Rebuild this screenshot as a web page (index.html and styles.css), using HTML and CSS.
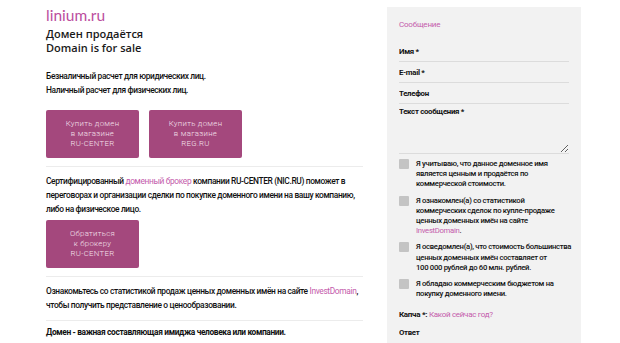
FILE: index.html
```html
<!DOCTYPE html>
<html lang="ru">
<head>
  <meta charset="UTF-8">
  <meta name="viewport" content="width=device-width, initial-scale=1.0">
  <title>linium.ru — Домен продаётся</title>
  <link rel="stylesheet" href="styles.css">
</head>
<body>
  <div class="page">
    <main class="main">
      <div class="logo">linium.ru</div>
      <div class="tagline">Домен продаётся<br>Domain is for sale</div>

      <p class="payment">Безналичный расчет для юридических лиц.<br>Наличный расчет для физических лиц.</p>

      <div class="buttons">
        <a class="btn" href="#">Купить домен<br>в магазине<br>RU-CENTER</a>
        <a class="btn" href="#">Купить домен<br>в магазине<br>REG.RU</a>
      </div>

      <hr class="sep">

      <p class="text">Сертифицированный <a href="#">доменный брокер</a> компании RU-CENTER (NIC.RU) поможет в<br>переговорах и организации сделки по покупке доменного имени на вашу компанию,<br>либо на физическое лицо.</p>

      <div class="buttons">
        <a class="btn" href="#">Обратиться<br>к брокеру<br>RU-CENTER</a>
      </div>

      <hr class="sep">

      <p class="text">Ознакомьтесь со статистикой продаж ценных доменных имён на сайте <a href="#">InvestDomain</a>,<br>чтобы получить представление о ценообразовании.</p>

      <hr class="sep">

      <p class="text text-strong">Домен - важная составляющая имиджа человека или компании.</p>
    </main>

    <aside class="form">
      <div class="form-title">Сообщение</div>

      <input class="field" type="text" placeholder="Имя *">
      <input class="field" type="email" placeholder="E-mail *">
      <input class="field" type="tel" placeholder="Телефон">
      <textarea class="field field-area" placeholder="Текст сообщения *"></textarea>

      <label class="check"><span class="box"></span><span>Я учитываю, что данное доменное имя<br>является ценным и продаётся по<br>коммерческой стоимости.</span></label>
      <label class="check"><span class="box"></span><span>Я ознакомлен(а) со статистикой<br>коммерческих сделок по купле-продаже<br>ценных доменных имён на сайте<br><a href="#">InvestDomain</a>.</span></label>
      <label class="check"><span class="box"></span><span>Я осведомлен(а), что стоимость большинства<br>ценных доменных имён составляет от<br>100 000 рублей до 60 млн. рублей.</span></label>
      <label class="check"><span class="box"></span><span>Я обладаю коммерческим бюджетом на<br>покупку доменного имени.</span></label>

      <div class="captcha"><b>Капча *:</b> <a href="#">Какой сейчас год?</a></div>
      <input class="field field-answer" type="text" placeholder="Ответ">
    </aside>
  </div>
</body>
</html>
```

FILE: styles.css
```css
body {
  margin: 0;
  font-family: Roboto, 'Liberation Sans', Arial, sans-serif;
  font-size: 8.4px;
  font-weight: 500;
  letter-spacing: -0.36px;
  color: #111;
  background: #fff;
}

a {
  color: #c45bab;
  font-weight: 400;
  text-decoration: none;
}

.page {
  display: flex;
  gap: 24px;
  padding: 7px 0 0 46px;
}

.main {
  width: 317px;
  white-space: nowrap;
}

.logo {
  font-family: Lato, 'Open Sans', sans-serif;
  font-size: 15.5px;
  line-height: 16px;
  font-weight: 400;
  letter-spacing: 0;
  color: #bb4d9e;
}

.tagline {
  margin-top: 4px;
  font-family: 'Open Sans', sans-serif;
  font-size: 11px;
  line-height: 14px;
  font-weight: 600;
  letter-spacing: 0;
  color: #1a1a1a;
}

.payment {
  margin: 14px 0 13px;
  line-height: 14px;
}

.buttons {
  display: flex;
  gap: 10px;
}

.btn {
  display: flex;
  align-items: center;
  justify-content: center;
  width: 93px;
  height: 48px;
  background: #a4487d;
  border-radius: 2px;
  color: #f4e0ec;
  font-size: 7.8px;
  font-weight: 300;
  line-height: 10px;
  text-align: center;
  letter-spacing: 0.3px;
}

.sep {
  margin: 8px 0 0;
  border: none;
  border-top: 1px solid #ececec;
}

.text {
  margin: 7px 0 4px;
  line-height: 14px;
}

.text-strong {
  margin-top: 4px;
  font-weight: 700;
}

.form {
  width: 170px;
  padding: 12px 12px 0;
  background: #f2f2f2;
  font-size: 7.7px;
  letter-spacing: -0.3px;
  white-space: nowrap;
}

.form-title {
  color: #c45bab;
  font-size: 8px;
  font-weight: 400;
  letter-spacing: -0.2px;
  line-height: 12px;
  margin-bottom: 10px;
}

.field {
  display: block;
  box-sizing: border-box;
  width: 100%;
  height: 21px;
  margin: 0;
  padding: 0;
  border: none;
  border-bottom: 1px solid #dcdcdc;
  background: transparent;
  font-family: Roboto, 'Liberation Sans', Arial, sans-serif;
  font-size: 7.8px;
  letter-spacing: -0.3px;
  color: #111;
}

.field::placeholder {
  color: #111;
  font-weight: 700;
}

.field-area {
  height: 50px;
  padding-top: 3px;
  resize: vertical;
}

.check {
  display: flex;
  gap: 7px;
  margin-top: 6px;
  line-height: 10.2px;
}

.check:first-of-type {
  margin-top: 5px;
}

.box {
  flex: none;
  width: 10px;
  height: 10px;
  background: #c4c4c4;
  border-radius: 1px;
}

.captcha {
  margin-top: 10px;
  line-height: 12px;
  font-size: 8px;
}

.captcha b {
  font-weight: 700;
}

.field-answer {
  height: 30px;
  padding-bottom: 6px;
}
```
